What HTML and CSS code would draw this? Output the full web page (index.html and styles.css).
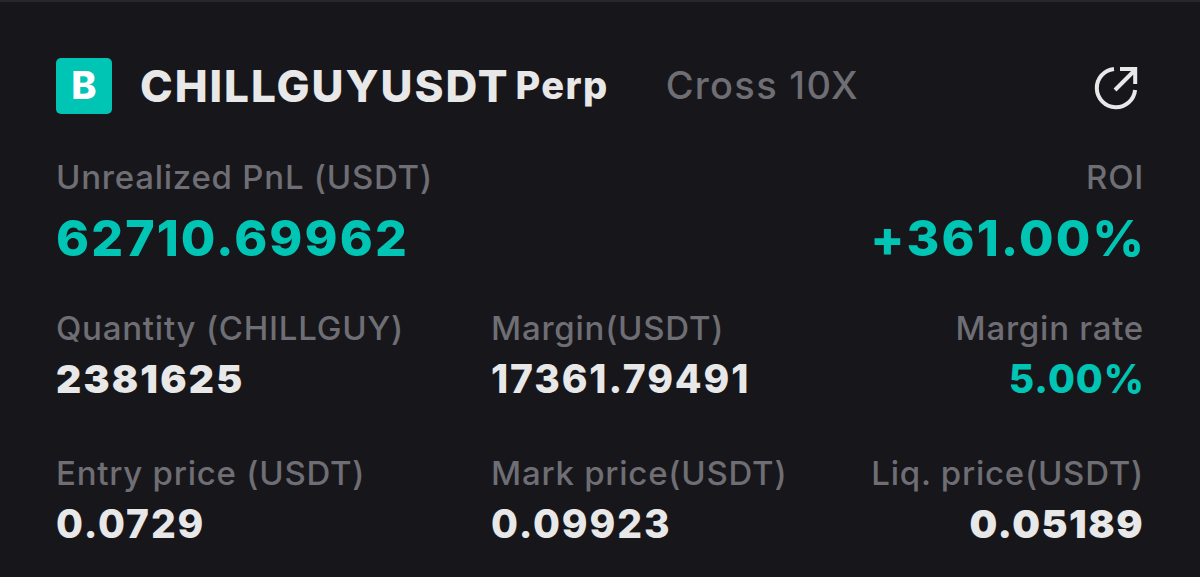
FILE: index.html
```html
<!DOCTYPE html>
<html lang="en">
<head>
  <meta charset="UTF-8" />
  <meta name="viewport" content="width=device-width, initial-scale=1.0" />
  <title>CHILLGUYUSDT Perp</title>
  <link rel="stylesheet" href="styles.css">
</head>
<body>
  <div class="position-card">
    <header>
      <span class="side-badge">B</span>
      <h1>CHILLGUYUSDT</h1>
      <span class="contract">Perp</span>
      <span class="leverage">Cross 10X</span>
      <svg class="share-icon" viewBox="0 0 48 48" fill="none" stroke="#e8e8e8" stroke-width="4">
        <path d="M20 6.9A19.2 19.2 0 1 0 41.1 28" />
        <path d="M21 28L41 8M26 6.9H41.2V22" />
      </svg>
    </header>

    <section class="summary">
      <div class="item">
        <p class="label">Unrealized PnL (USDT)</p>
        <p class="big">62710.69962</p>
      </div>
      <div class="item right">
        <p class="label">ROI</p>
        <p class="big roi">+361.00%</p>
      </div>
    </section>

    <section class="details">
      <div class="item">
        <p class="label">Quantity (CHILLGUY)</p>
        <p class="value quantity">2381625</p>
      </div>
      <div class="item">
        <p class="label">Margin(USDT)</p>
        <p class="value">17361.79491</p>
      </div>
      <div class="item right">
        <p class="label">Margin rate</p>
        <p class="value rate">5.00%</p>
      </div>
      <div class="item">
        <p class="label">Entry price (USDT)</p>
        <p class="value">0.0729</p>
      </div>
      <div class="item">
        <p class="label">Mark price(USDT)</p>
        <p class="value">0.09923</p>
      </div>
      <div class="item right">
        <p class="label">Liq. price(USDT)</p>
        <p class="value liq">0.05189</p>
      </div>
    </section>
  </div>
</body>
</html>
```
FILE: styles.css
```css
* {
  box-sizing: border-box;
}
body {
  margin: 0;
  font-family: Inter, sans-serif;
  background: #17171b;
  color: #e8e8e8;
}
h1, p {
  margin: 0;
}
.position-card {
  height: 577px;
  padding: 55px 56px 0 56px;
  border-top: 2px solid #28282c;
  overflow: hidden;
}
header {
  display: flex;
  align-items: center;
  height: 57px;
  white-space: nowrap;
}
.side-badge {
  width: 56px;
  height: 56px;
  border-radius: 5px;
  background: #00c4b4;
  color: #fff;
  font-size: 38px;
  font-weight: 800;
  line-height: 54px;
  text-align: center;
}
h1 {
  margin-left: 28px;
  font-size: 44px;
  font-weight: 800;
  line-height: 54px;
  letter-spacing: 1.95px;
}
.contract {
  margin-left: 6px;
  padding-bottom: 2px;
  font-size: 38px;
  font-weight: 800;
  letter-spacing: 1.4px;
}
.leverage {
  margin-left: 57px;
  padding-bottom: 2px;
  font-size: 38px;
  font-weight: 500;
  letter-spacing: 1.3px;
  color: #6e6e74;
}
.share-icon {
  width: 48px;
  height: 48px;
  margin-left: auto;
  margin-right: 2px;
}
.summary {
  display: flex;
  justify-content: space-between;
  margin-top: 43px;
}
.item {
  white-space: nowrap;
}
.right {
  text-align: right;
}
.label {
  font-size: 33px;
  line-height: 40px;
  font-weight: 500;
  letter-spacing: 0.76px;
  color: #6e6e74;
}
.big {
  margin-top: 11px;
  font-size: 50px;
  line-height: 60px;
  font-weight: 800;
  letter-spacing: 2.1px;
  color: #00c4b4;
}
.roi {
  margin-right: -2px;
}
.details {
  display: grid;
  grid-template-columns: 435px 340px 1fr;
  row-gap: 52px;
  margin-top: 40px;
}
.value {
  margin-top: 9px;
  font-size: 39px;
  line-height: 44px;
  font-weight: 800;
  letter-spacing: 1.85px;
}
.quantity {
  font-weight: 900;
  letter-spacing: 2.2px;
}
.rate {
  margin-right: -1px;
  color: #00c4b4;
  letter-spacing: 1px;
}
.liq {
  font-weight: 900;
  letter-spacing: 1.5px;
}
```
